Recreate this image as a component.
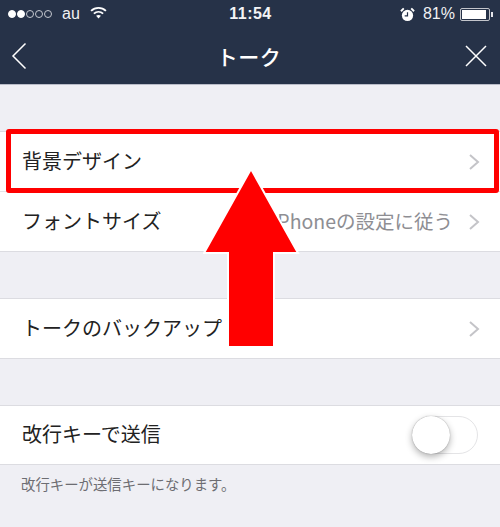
<div class="page">
  <header class="head">
    <div class="status">
      <div class="left">
        <span class="dot on"></span><span class="dot on"></span><span class="dot"></span><span class="dot"></span><span class="dot"></span>
        <span class="carrier">au</span>
        <svg class="wifi" width="17" height="13" viewBox="0 0 18 14">
          <path d="M1 5.2C5.6 .9 12.4 .9 17 5.2" fill="none" stroke="#fff" stroke-width="2"/>
          <path d="M4 8.2C6.9 5.6 11.1 5.6 14 8.2" fill="none" stroke="#fff" stroke-width="2"/>
          <path d="M6.4 10.6L9 13.4L11.6 10.6C10 9.3 8 9.3 6.4 10.6Z" fill="#fff"/>
        </svg>
      </div>
      <div class="time">11:54</div>
      <div class="right">
        <svg class="alarm" width="15" height="15" viewBox="0 0 16 16">
          <circle cx="8" cy="9" r="6" fill="#fff"/>
          <path d="M8 5.5V9.5H5" fill="none" stroke="#263248" stroke-width="1.3"/>
          <path d="M1 4.5L4 1.5M15 4.5L12 1.5" stroke="#fff" stroke-width="2"/>
        </svg>
        <span class="pct">81%</span>
        <div class="battery"><div class="level"></div></div>
        <div class="nub"></div>
      </div>
    </div>
    <nav class="nav">
      <svg width="16" height="28" viewBox="0 0 16 28"><path d="M14.5 1.5L2 14L14.5 26.5" fill="none" stroke="#fff" stroke-width="1.5"/></svg>
      <div class="title">トーク</div>
      <svg width="22" height="22" viewBox="0 0 22 22"><path d="M1 1L21 21M21 1L1 21" fill="none" stroke="#fff" stroke-width="1.5"/></svg>
    </nav>
  </header>

  <section class="group">
    <div class="row">
      <span class="label">背景デザイン</span>
      <svg class="chev" width="12" height="18" viewBox="0 0 12 18"><path d="M2 2L10 9L2 16" fill="none" stroke="#c4c4c8" stroke-width="2"/></svg>
    </div>
    <div class="row">
      <span class="label">フォントサイズ</span>
      <span class="value">iPhoneの設定に従う</span>
      <svg class="chev" width="12" height="18" viewBox="0 0 12 18"><path d="M2 2L10 9L2 16" fill="none" stroke="#c4c4c8" stroke-width="2"/></svg>
    </div>
  </section>

  <section class="group">
    <div class="row">
      <span class="label">トークのバックアップ</span>
      <svg class="chev" width="12" height="18" viewBox="0 0 12 18"><path d="M2 2L10 9L2 16" fill="none" stroke="#c4c4c8" stroke-width="2"/></svg>
    </div>
  </section>

  <section class="group">
    <div class="row short">
      <span class="label">改行キーで送信</span>
      <div class="toggle"><div class="knob"></div></div>
    </div>
  </section>

  <p class="note">改行キーが送信キーになります。</p>

  <div class="redbox"></div>
  <svg class="arrow" width="100" height="184" viewBox="0 0 100 184">
    <path d="M48 2L95 86H71V180H25V86H1Z" fill="#f00" stroke="#fff" stroke-width="2"/>
  </svg>
</div>

<style>
  :global(body) {
    margin: 0;
    background: #efeff4;
    font-family: "Noto Sans CJK JP", "Liberation Sans", sans-serif;
  }
  .page {
    position: relative;
    width: 500px;
    height: 527px;
    overflow: hidden;
    background: #efeff4;
    color: #222;
  }
  .head {
    height: 85px;
    background: #263248;
    color: #fff;
    border-bottom: 1px solid #b9bcc8;
    box-sizing: border-box;
  }
  .status {
    height: 28px;
    display: grid;
    grid-template-columns: 1fr auto 1fr;
    align-items: center;
    padding: 0 7px 0 8px;
  }
  .left, .right {
    display: flex;
    align-items: center;
  }
  .right { justify-content: flex-end; }
  .dot {
    box-sizing: border-box;
    width: 8px;
    height: 8px;
    border-radius: 50%;
    border: 1px solid #c6c9d0;
    margin-right: 1px;
  }
  .dot.on { background: #fff; border-color: #fff; }
  .carrier {
    font: 16px "Liberation Sans", sans-serif;
    margin-left: 9px;
    color: #f1f1f3;
  }
  .wifi { margin-left: 10px; margin-top: -3px; }
  .time {
    font: 700 16px "Liberation Sans", sans-serif;
    letter-spacing: .5px;
    color: #f4f4f6;
  }
  .alarm { margin-right: 8px; }
  .pct {
    font: 16px "Liberation Sans", sans-serif;
    color: #f1f1f3;
    margin-right: 5px;
  }
  .battery {
    box-sizing: border-box;
    width: 30px;
    height: 13px;
    padding: 1px;
    border: 1px solid #c3c5cb;
    border-radius: 2px;
  }
  .level { width: 24px; height: 9px; background: #fff; }
  .nub { width: 2px; height: 5px; background: #e6e6ea; margin-left: 1px; }
  .nav {
    height: 56px;
    display: flex;
    justify-content: space-between;
    align-items: center;
    padding: 0 13px 0 11px;
  }
  .title {
    font-size: 21px;
    font-weight: 500;
    letter-spacing: .5px;
    margin-left: 6px;
  }
  .group {
    margin-top: 46px;
    background: #fff;
    border-top: 1px solid #dcdce1;
    border-bottom: 1px solid #dcdce1;
  }
  .row {
    height: 59px;
    display: flex;
    align-items: center;
    padding: 0 20px 0 22px;
    font-size: 20px;
    box-sizing: border-box;
  }
  .row + .row { border-top: 1px solid #e4e4e8; height: 60px; }
  .row.short { height: 58px; }
  .label { flex: 1; margin-bottom: 3px; }
  .value { color: #8e8e93; font-size: 19.5px; margin-right: 15px; margin-bottom: 3px; }
  .chev { display: block; }
  .toggle {
    position: relative;
    width: 66px;
    height: 38px;
    margin-right: 2px;
    border: 1px solid #e4e4e6;
    border-radius: 20px;
    box-sizing: border-box;
  }
  .knob {
    position: absolute;
    left: -1px;
    top: -1px;
    width: 38px;
    height: 38px;
    background: #fff;
    border-radius: 50%;
    box-shadow: 0 3px 7px rgba(0,0,0,.3), 0 0 1px rgba(0,0,0,.4);
  }
  .note {
    margin: 9px 0 0 21px;
    font-size: 14.4px;
    line-height: 20px;
    color: #6d6d72;
  }
  .redbox {
    position: absolute;
    left: 6px;
    top: 129px;
    width: 483px;
    height: 54px;
    border: 5px solid #f00;
    border-radius: 3px;
  }
  .arrow {
    position: absolute;
    left: 203px;
    top: 167px;
  }
</style>
